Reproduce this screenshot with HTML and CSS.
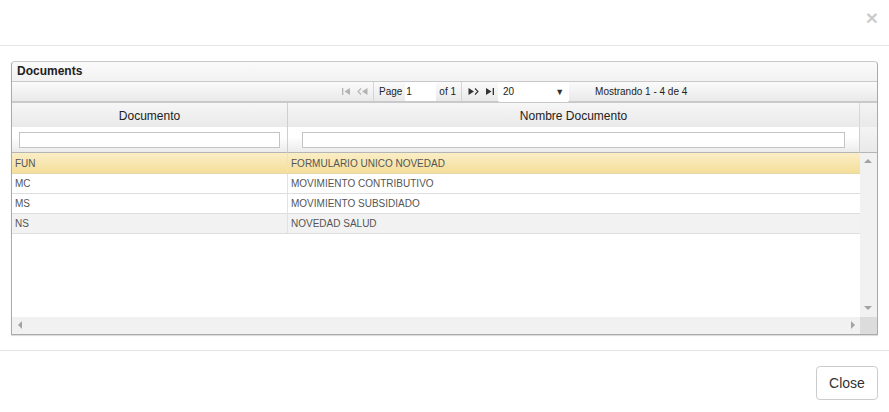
FILE: index.html
```html
<!DOCTYPE html>
<html>
<head>
<meta charset="utf-8">
<link rel="stylesheet" href="styles.css">
</head>
<body>
<div class="modal">
  <div class="modal-header"><span class="close">×</span></div>
  <div class="modal-body">
    <div class="grid">
      <div class="caption">Documents</div>
      <div class="pager">
        <span class="pbtn dis"><svg width="9" height="7" viewBox="0 0 9 7"><rect x="0" y="0" width="1.3" height="7" fill="currentColor"/><path d="M8 0 L2.5 3.5 L8 7 Z" fill="currentColor"/></svg></span>
        <span class="pbtn dis"><svg width="11" height="7" viewBox="0 0 11 7"><path d="M4 0.5 L1 3.5 L4 6.5" stroke="currentColor" stroke-width="1.1" fill="none"/><path d="M10.5 0 L5 3.5 L10.5 7 Z" fill="currentColor"/></svg></span>
        <span class="sep"></span>
        <span class="ptxt">Page</span>
        <span class="pinput">1</span>
        <span class="ptxt">of 1</span>
        <span class="sep"></span>
        <span class="pbtn"><svg width="11" height="7" viewBox="0 0 11 7"><path d="M0.5 0 L6 3.5 L0.5 7 Z" fill="currentColor"/><path d="M7 0.5 L10 3.5 L7 6.5" stroke="currentColor" stroke-width="1.1" fill="none"/></svg></span>
        <span class="pbtn"><svg width="9" height="7" viewBox="0 0 9 7"><path d="M1 0 L6.5 3.5 L1 7 Z" fill="currentColor"/><rect x="7.7" y="0" width="1.3" height="7" fill="currentColor"/></svg></span>
        <span class="pselect"><span>20</span><span class="arrow">▼</span></span>
        <span class="info">Mostrando 1 - 4 de 4</span>
      </div>
      <div class="hdiv">
        <div class="th c1">Documento</div>
        <div class="th c2">Nombre Documento</div>
        <div class="th gut"></div>
        <div class="tf c1"><span class="finput"></span></div>
        <div class="tf c2"><span class="finput"></span></div>
        <div class="tf gut"></div>
      </div>
      <div class="bdiv">
        <div class="rows">
          <div class="row sel"><div class="td c1">FUN</div><div class="td c2">FORMULARIO UNICO NOVEDAD</div></div>
          <div class="row"><div class="td c1">MC</div><div class="td c2">MOVIMIENTO CONTRIBUTIVO</div></div>
          <div class="row"><div class="td c1">MS</div><div class="td c2">MOVIMIENTO SUBSIDIADO</div></div>
          <div class="row alt"><div class="td c1">NS</div><div class="td c2">NOVEDAD SALUD</div></div>
        </div>
        <div class="vscroll"><span class="up"></span><span class="down"></span></div>
        <div class="hscroll"><span class="left"></span><span class="right"></span></div>
        <div class="corner"></div>
      </div>
    </div>
  </div>
  <div class="modal-footer"><button class="btn">Close</button></div>
</div>
</body>
</html>
```
FILE: styles.css
```css
* { box-sizing: border-box; }
html, body { margin: 0; padding: 0; background: #fff; }
body { font-family: "Liberation Sans", Arial, sans-serif; color: #333; width: 889px; height: 412px; overflow: hidden; }

.modal-header { height: 46px; border-bottom: 1px solid #e5e5e5; display: flex; justify-content: flex-end; align-items: flex-start; padding: 7px 11px 0 0; }
.close { font-size: 21px; font-weight: bold; line-height: 21px; color: #000; opacity: .2; }

.modal-body { padding: 15px 11px 15px 11px; }

.grid { border: 1px solid #aaa; border-top-color: #c8c8c8; border-radius: 4px 4px 0 0; box-shadow: 0 1px 1px rgba(0,0,0,.15); }

.caption { height: 20px; padding: 2px 0 0 5px; font-size: 12px; font-weight: bold; color: #222; background: linear-gradient(#fafafa, #f2f2f2); border-bottom: 1px solid #c8c8c8; border-radius: 4px 4px 0 0; line-height: 15px; }

.pager { height: 21px; display: flex; align-items: center; padding-left: 326px; font-size: 10px; color: #222; background: linear-gradient(#fbfbfb, #e9e9e9); border-bottom: 2px solid #c9c9c9; }
.pbtn { width: 16px; display: flex; justify-content: center; align-items: center; color: #333; height: 20px; }
.pbtn.dis { color: #b3b3b3; }
.sep { width: 1px; height: 19px; background: #d4d4d4; margin: 0 3px 0 3px; }
.ptxt { margin: 0 2px; }
.pinput { background: #fff; width: 31px; height: 19px; line-height: 19px; margin: 0 1px 0 1px; padding-left: 1px; }
.pselect { background: #fff; width: 71px; height: 20px; display: flex; justify-content: space-between; align-items: center; padding: 0 5px 0 5px; margin-left: 1px; border-radius: 2px; }
.pselect .arrow { font-size: 9px; color: #333; }
.info { margin-left: 26px; }

.hdiv { display: grid; grid-template-columns: 276px 572px 17px; }
.th { height: 24px; font-size: 12px; color: #222; display: flex; align-items: center; justify-content: center; background: linear-gradient(#f6f6f6, #e9e9e9); border-right: 1px solid #cfcfcf; padding-top: 1px; }
.th.c2 { border-right: 1px solid #d8d8d8; }
.th.gut, .tf.gut { border-right: none; background: linear-gradient(#f4f4f4, #e9e9e9); }
.tf { height: 26px; border-bottom: 1px solid #b5b5b5; border-right: 1px solid #cfcfcf; background: linear-gradient(#fff 40%, #ebebeb); display: flex; align-items: center; padding: 0 7px 0 7px; }
.tf.c2 { padding: 0 14px 0 14px; }
.finput { display: block; width: 100%; height: 16px; background: #fff; border: 1px solid #c4c4c4; margin-top: 1px; }

.bdiv { display: grid; grid-template-columns: 848px 17px; grid-template-rows: 164px 17px; }
.rows { background: #fff; }
.row { display: grid; grid-template-columns: 276px 572px; height: 20px; border-bottom: 1px solid #dedede; }
.row.sel { height: 21px; background: linear-gradient(#fbeec6, #f4de9a); border-bottom-color: #e6d8a8; }
.row.alt { background: #f2f2f2; }
.td { font-size: 10px; color: #555; padding: 0 3px; display: flex; align-items: center; border-right: 1px solid #e2e2e2; }
.row .c2 { padding-left: 3px; border-right: none; }

.vscroll { background: #f1f1f1; position: relative; }
.up, .down, .left, .right { position: absolute; width: 0; height: 0; border: 4px solid transparent; }
.up { border-bottom-color: #a3a3a3; border-top-width: 0; left: 4px; top: 6px; }
.down { border-top-color: #a3a3a3; border-bottom-width: 0; left: 4px; bottom: 7px; }
.hscroll { background: #f1f1f1; position: relative; }
.left { border-right-color: #a3a3a3; border-left-width: 0; left: 6px; top: 4px; }
.right { border-left-color: #a3a3a3; border-right-width: 0; right: 5px; top: 4px; }
.corner { background: #dcdcdc; }

.modal-footer { border-top: 1px solid #e5e5e5; margin-top: 0; padding: 15px 11px 0 0; display: flex; justify-content: flex-end; }
.btn { font-family: "Liberation Sans", Arial, sans-serif; font-size: 14px; color: #333; background: #fff; border: 1px solid #ccc; border-radius: 4px; height: 34px; width: 62px; padding: 0; }
```
